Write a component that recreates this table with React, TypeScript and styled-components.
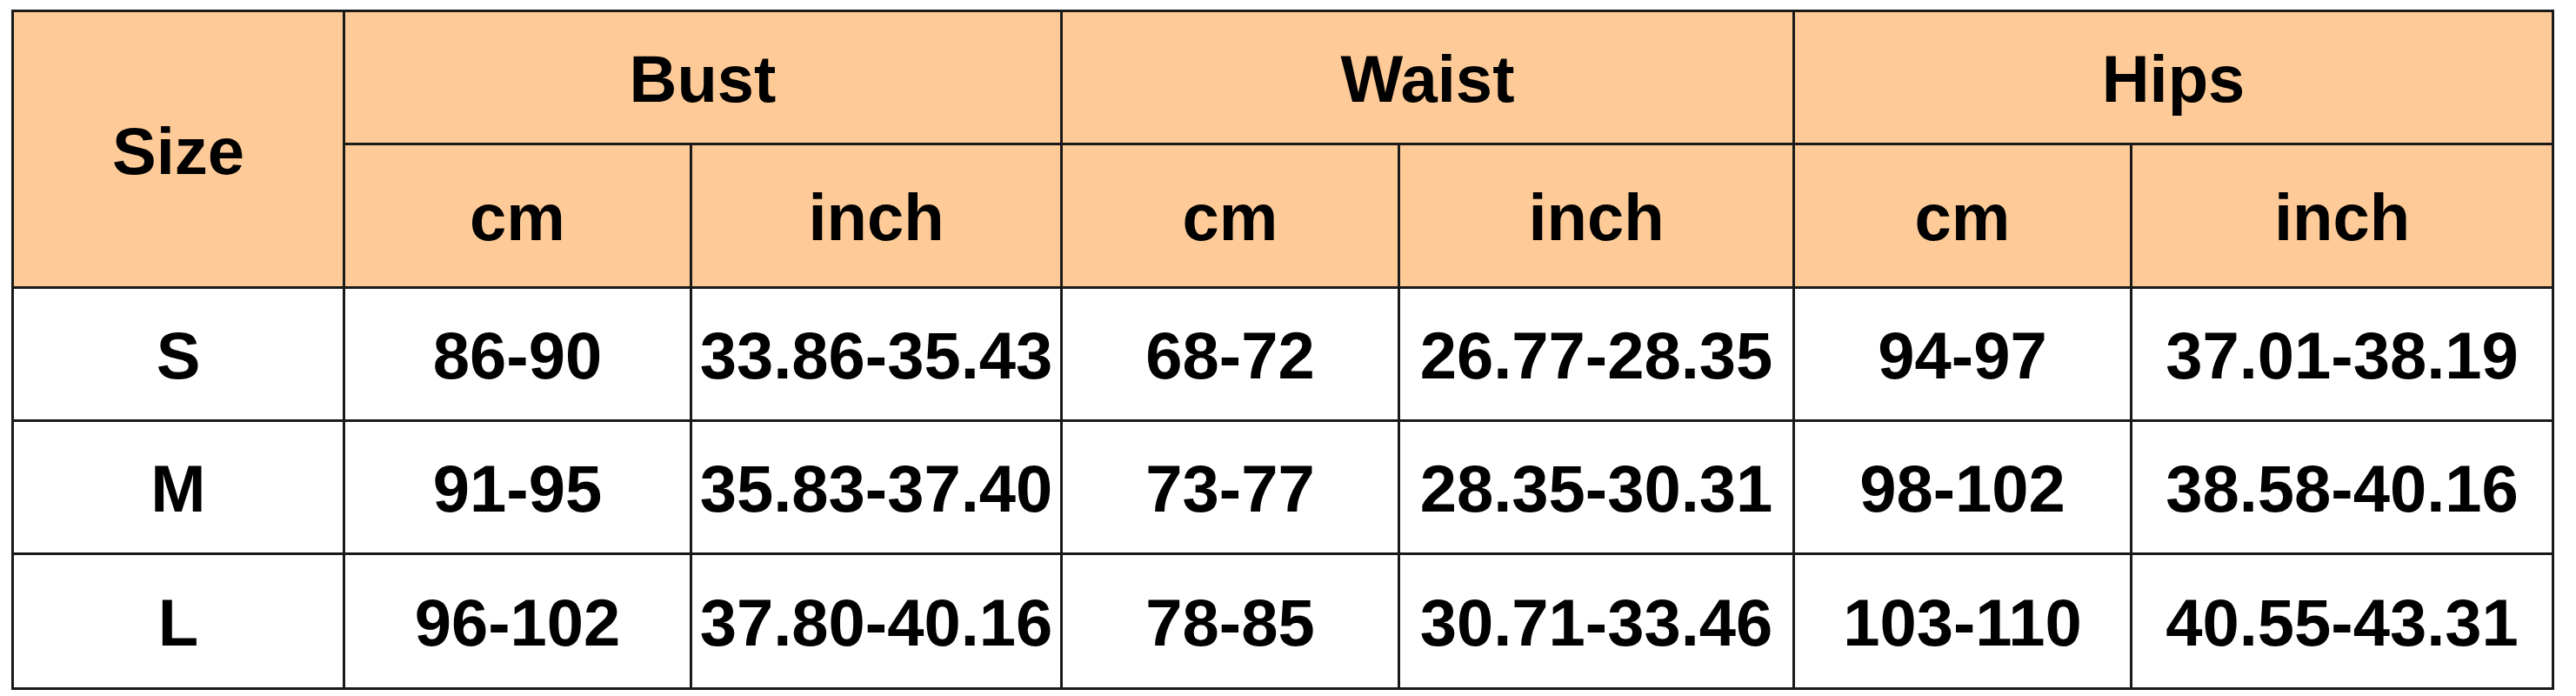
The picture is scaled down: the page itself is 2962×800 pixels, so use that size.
import React from "react";
import styled, { createGlobalStyle } from "styled-components";

const GlobalStyle = createGlobalStyle`
  html, body {
    margin: 0;
    padding: 0;
    background: #ffffff;
  }
  body {
    font-family: "Liberation Sans", Arial, sans-serif;
  }
`;

const Page = styled.div`
  padding: 11px 0 0 13px;
  background: #ffffff;
`;

const SizeTable = styled.div`
  display: inline-grid;
  grid-template-columns: 378px 396px 423px 385px 451px 385px 482px;
  grid-template-rows: 150px 162px 150px 150px 152px;
  gap: 3px;
  padding: 3px;
  background: #1a1a1a;
`;

const Cell = styled.div<{ $head?: boolean; $colSpan?: number; $rowSpan?: number }>`
  display: flex;
  align-items: center;
  justify-content: center;
  background: ${(p) => (p.$head ? "#fecb98" : "#ffffff")};
  grid-column: ${(p) => (p.$colSpan ? `span ${p.$colSpan}` : "auto")};
  grid-row: ${(p) => (p.$rowSpan ? `span ${p.$rowSpan}` : "auto")};
  font-family: "Liberation Sans", Arial, sans-serif;
  font-weight: 700;
  font-size: 76px;
  color: #000000;
  line-height: 1;
  white-space: nowrap;
  overflow: hidden;
`;

const Label = styled.span`
  display: inline-block;
  letter-spacing: 0;
  padding-top: 4px;
`;

const groups = ["Bust", "Waist", "Hips"];

const rows: string[][] = [
  ["S", "86-90", "33.86-35.43", "68-72", "26.77-28.35", "94-97", "37.01-38.19"],
  ["M", "91-95", "35.83-37.40", "73-77", "28.35-30.31", "98-102", "38.58-40.16"],
  ["L", "96-102", "37.80-40.16", "78-85", "30.71-33.46", "103-110", "40.55-43.31"],
];

export default function App() {
  return (
    <>
      <GlobalStyle />
      <Page>
        <SizeTable>
          <Cell $head $rowSpan={2}>
            <Label>Size</Label>
          </Cell>
          {groups.map((g) => (
            <Cell key={g} $head $colSpan={2}>
              <Label>{g}</Label>
            </Cell>
          ))}
          {groups.map((g) => (
            <React.Fragment key={g + "-units"}>
              <Cell $head>
                <Label>cm</Label>
              </Cell>
              <Cell $head>
                <Label>inch</Label>
              </Cell>
            </React.Fragment>
          ))}
          {rows.map((r) =>
            r.map((v, i) => (
              <Cell key={r[0] + i}>
                <Label>{v}</Label>
              </Cell>
            ))
          )}
        </SizeTable>
      </Page>
    </>
  );
}
